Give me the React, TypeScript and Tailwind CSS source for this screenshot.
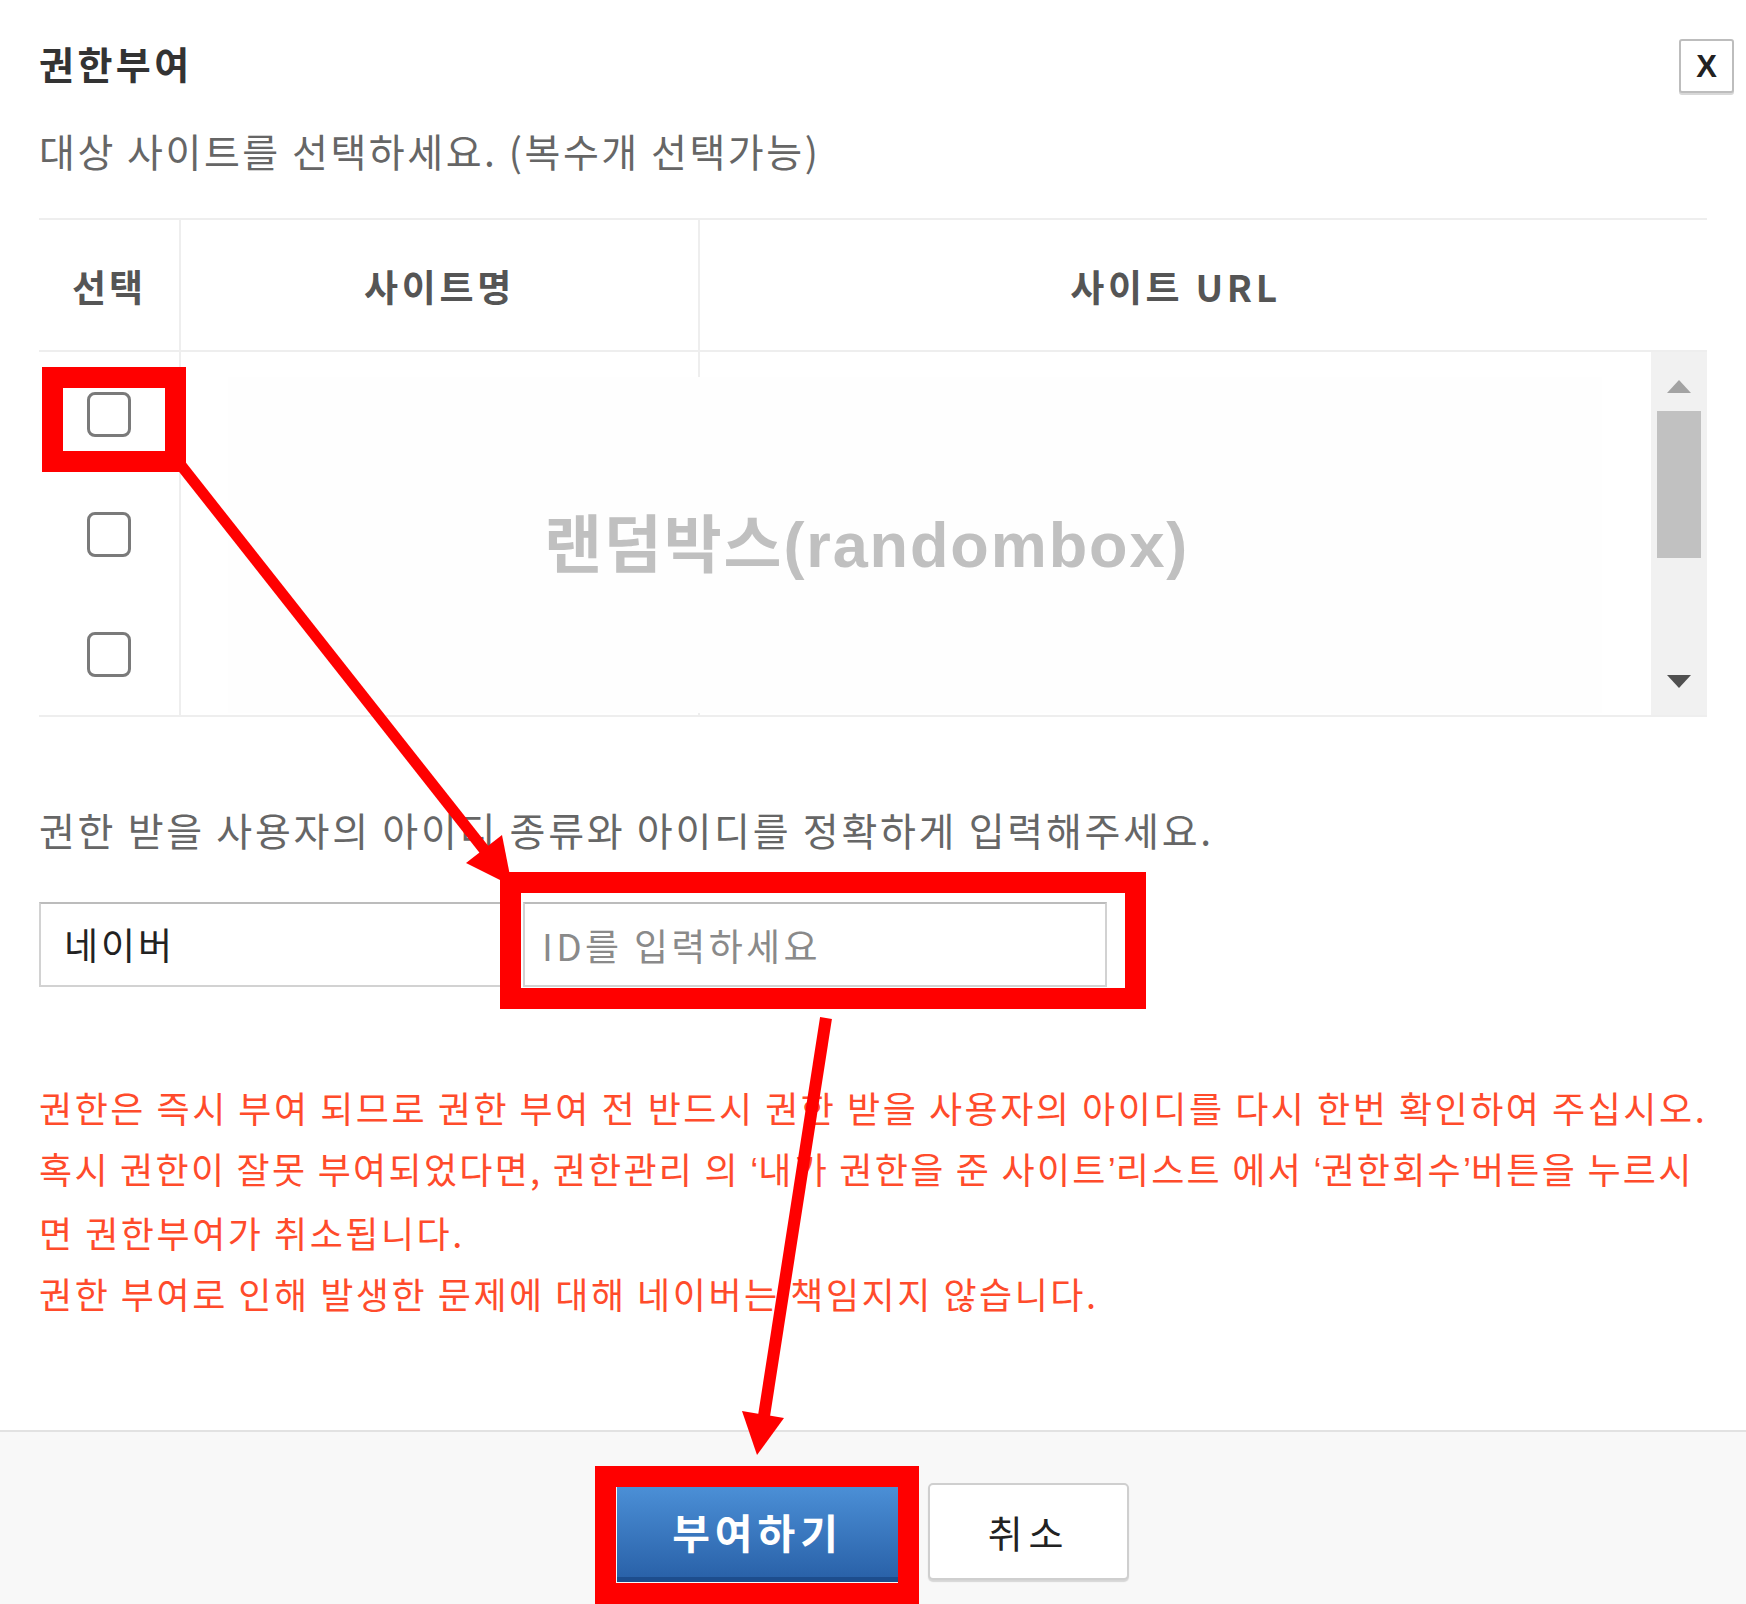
import React from "react";

const KR = "font-['Noto_Sans_CJK_KR','Noto_Sans',sans-serif]";

function Checkbox() {
  return (
    <div className="h-[120px] flex items-center justify-center">
      <div className="w-[44px] h-[45px] rounded-[8px] border-[3px] border-[#7a7a7a] bg-white" />
    </div>
  );
}

function Q({ c }: { c: string }) {
  return <span className="font-['Liberation_Sans',sans-serif] tracking-normal">{c}</span>;
}

export default function App() {
  return (
    <div className={`relative w-[1746px] h-[1604px] bg-white overflow-hidden ${KR}`}>
      {/* Header */}
      <div className="mt-[39px] h-[54px] pl-[39px] pr-[12px] flex items-center justify-between">
        <div className="-mt-[6px] text-[38px] leading-none font-bold text-[#333] tracking-[0.09em]">권한부여</div>
        <div className="w-[55px] h-[54px] rounded-[3px] border-2 border-[#bdbdbd] shadow-[0_2px_0_#d8d8d8] flex items-center justify-center bg-white">
          <span className="font-['Liberation_Sans',sans-serif] font-bold text-[31px] leading-none text-[#222]">X</span>
        </div>
      </div>

      <div className="px-[39px]">
        {/* Subtitle */}
        <div className="mt-[27px] h-[60px] flex items-center text-[39px] text-[#666] whitespace-nowrap tracking-[0.065em]">
          대상 사이트를 선택하세요. (복수개 선택가능)
        </div>

        {/* Table */}
        <div className="mt-[38px] border-t-2 border-[#eeeeee]">
          <div className="flex h-[132px] border-b-2 border-[#eeeeee] text-[37px] font-bold text-[#555] tracking-[0.08em]">
            <div className="w-[142px] border-r-2 border-[#eeeeee] flex items-center justify-center pt-[4px]">선택</div>
            <div className="w-[519px] border-r-2 border-[#eeeeee] flex items-center justify-center pt-[4px] tracking-[0.1em]">사이트명</div>
            <div className="flex-1 flex items-center justify-center pr-[56px] pt-[4px] tracking-[0.1em]">사이트 URL</div>
          </div>
          <div className="relative flex h-[365px] border-b-2 border-[#eeeeee]">
            <div className="w-[142px] border-r-2 border-[#eeeeee] pt-[2px]">
              <Checkbox />
              <Checkbox />
              <Checkbox />
            </div>
            <div className="w-[519px] border-r-2 border-[#eeeeee]" />
            <div className="flex-1" />
            <div className="w-[56px] bg-[#f1f1f1] flex flex-col items-center">
              <svg width="26" height="15" viewBox="0 0 26 15" className="mt-[27px]">
                <polygon points="13,1 25,14 1,14" fill="#a3a3a3" />
              </svg>
              <div className="mt-[17px] w-[44px] h-[147px] bg-[#c1c1c1]" />
              <svg width="26" height="15" viewBox="0 0 26 15" className="mt-[116px]">
                <polygon points="1,1 25,1 13,14" fill="#505050" />
              </svg>
            </div>
            {/* watermark overlay */}
            <div className="absolute left-[189px] top-[25px] w-[1374px] h-[336px] bg-[#fefefe] flex items-center pl-[316px]">
              <span className="font-['Liberation_Sans','Noto_Sans_CJK_KR',sans-serif] font-bold text-[63px] leading-none text-[#c0c0c0] whitespace-nowrap tracking-[0.03em]">
                랜덤박스(randombox)
              </span>
            </div>
          </div>
        </div>

        {/* Instruction */}
        <div className="mt-[82px] h-[60px] flex items-center text-[39px] text-[#666] whitespace-nowrap tracking-[0.07em]">
          권한 받을 사용자의 아이디 종류와 아이디를 정확하게 입력해주세요.
        </div>

        {/* Inputs */}
        <div className="mt-[43px] flex h-[85px]">
          <div className="w-[471px] h-full border-2 border-[#d2d2d2] border-t-[#bcbcbc] bg-white flex items-center pl-[23px] text-[37px] text-[#222] tracking-[0.08em]">
            네이버
          </div>
          <input
            readOnly
            placeholder="ID를 입력하세요"
            className="ml-[13px] w-[584px] h-full border-2 border-[#d2d2d2] border-t-[#bcbcbc] bg-white pl-[17px] text-[37px] tracking-[0.09em] text-[#222] placeholder:text-[#8a8a8a] outline-none"
          />
        </div>

        {/* Warning */}
        <div className="mt-[90px] text-[36px] leading-[61px] text-[#ff4b2b] whitespace-nowrap tracking-[0.07em]">
          <div>권한은 즉시 부여 되므로 권한 부여 전 반드시 권한 받을 사용자의 아이디를 다시 한번 확인하여 주십시오.</div>
          <div className="tracking-[0.063em]">
            혹시 권한이 잘못 부여되었다면, 권한관리 의 <Q c="‘" />내가 권한을 준 사이트<Q c="’" />리스트 에서 <Q c="‘" />권한회수<Q c="’" />버튼을 누르시
          </div>
          <div>면 권한부여가 취소됩니다.</div>
          <div>권한 부여로 인해 발생한 문제에 대해 네이버는 책임지지 않습니다.</div>
        </div>
      </div>

      {/* Footer */}
      <div className="mt-[106px] h-[176px] border-t-2 border-[#e2e2e2] bg-[#f8f8f8] flex justify-center items-start gap-[30px] pt-[51px]">
        <div className="mt-[4px] w-[281px] h-[95px] bg-gradient-to-b from-[#4b8fd6] to-[#2a62a9] border-b-[5px] border-[#1d4d8d] flex items-center justify-center text-white font-bold text-[41px] tracking-[0.12em]">
          부여하기
        </div>
        <div className="w-[201px] h-[97px] rounded-[5px] border-2 border-[#cfcfcf] bg-white shadow-[0_2px_1px_#d6d6d6] flex items-center justify-center text-[38px] text-[#222] tracking-[0.15em]">
          취소
        </div>
      </div>

      {/* Annotations */}
      <svg className="absolute inset-0 pointer-events-none" width="1746" height="1604" viewBox="0 0 1746 1604">
        <rect x="52.5" y="377.5" width="123" height="84" fill="none" stroke="#ff0000" strokeWidth="21" />
        <rect x="510.5" y="882.5" width="625" height="116" fill="none" stroke="#ff0000" strokeWidth="21" />
        <rect x="605.5" y="1476.5" width="303" height="117" fill="none" stroke="#ff0000" strokeWidth="21" />
        <line x1="176" y1="459" x2="486" y2="852" stroke="#ff0000" strokeWidth="11" />
        <polygon points="466,863 502,835 512,886" fill="#ff0000" />
        <line x1="826" y1="1018" x2="764" y2="1416" stroke="#ff0000" strokeWidth="12" />
        <polygon points="742,1411 784,1418 757,1455" fill="#ff0000" />
      </svg>
    </div>
  );
}
